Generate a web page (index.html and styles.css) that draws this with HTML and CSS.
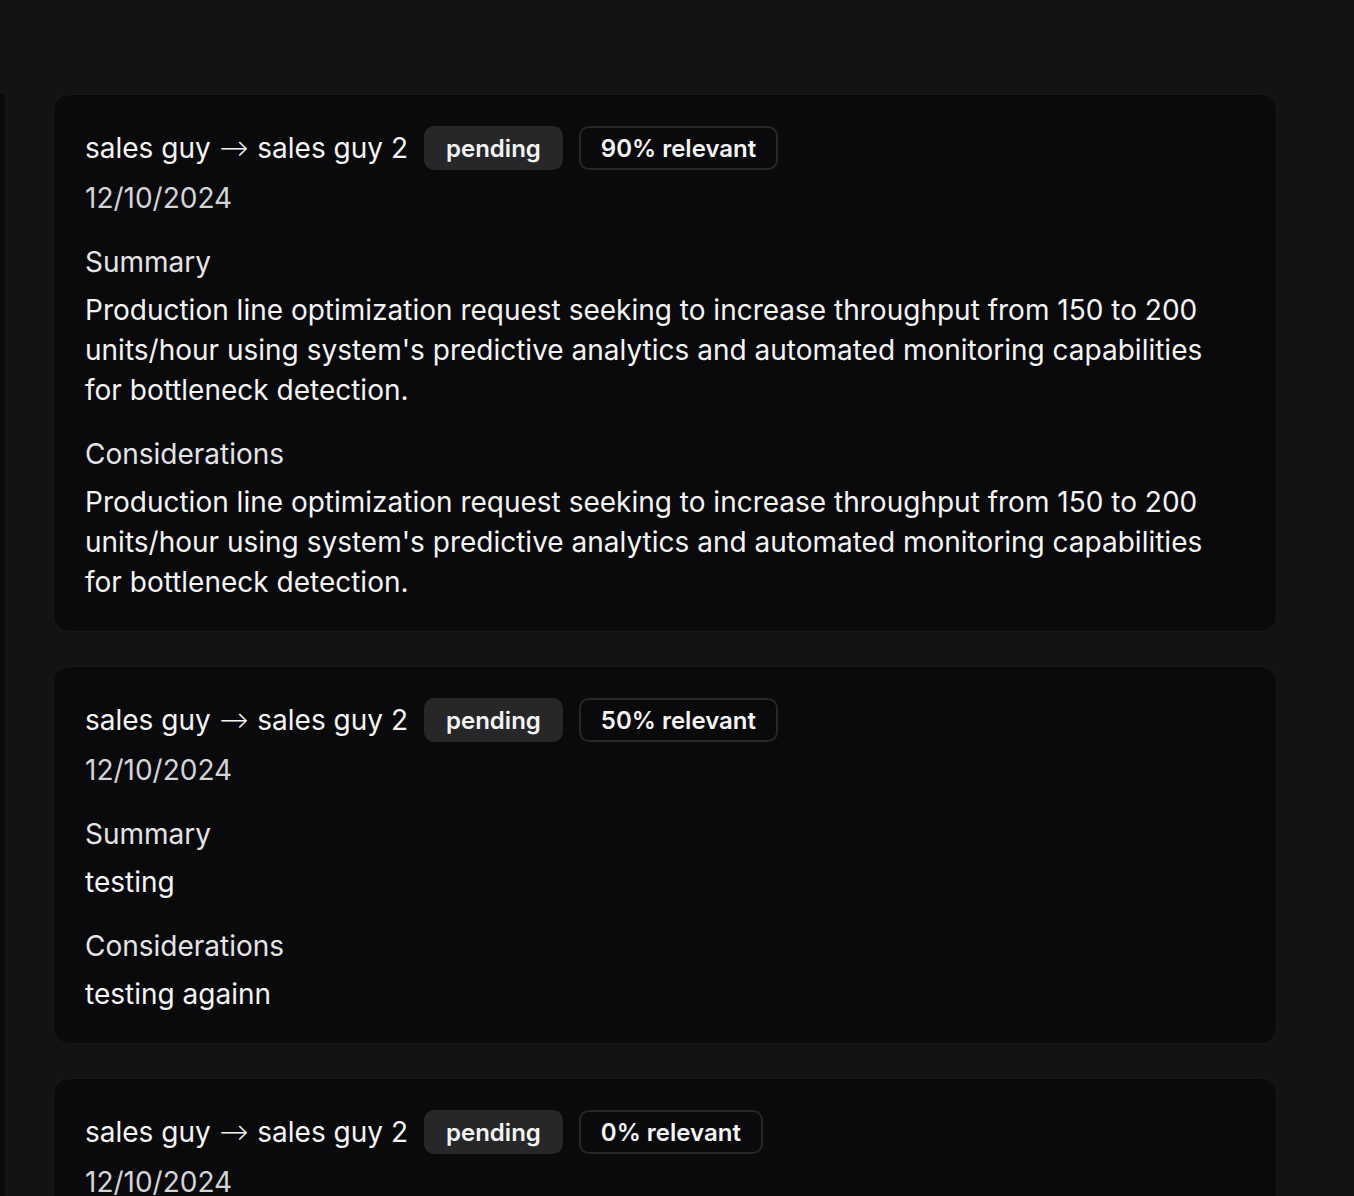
FILE: index.html
```html
<!DOCTYPE html>
<html lang="en">
<head>
<meta charset="utf-8">
<title>Messages</title>
<link rel="stylesheet" href="styles.css">
</head>
<body>
<div class="page">
  <div class="sliver"></div>
  <div class="list">
    <div class="card">
      <div class="head">
        <span class="title">sales guy <span class="arrow">⟶</span> sales guy 2</span>
        <span class="badge solid">pending</span>
        <span class="badge outline">90% relevant</span>
      </div>
      <div class="date">12/10/2024</div>
      <div class="section">
        <div class="label">Summary</div>
        <p class="text">Production line optimization request seeking to increase throughput from 150 to 200 units/hour using system's predictive analytics and automated monitoring capabilities for bottleneck detection.</p>
      </div>
      <div class="section">
        <div class="label">Considerations</div>
        <p class="text">Production line optimization request seeking to increase throughput from 150 to 200 units/hour using system's predictive analytics and automated monitoring capabilities for bottleneck detection.</p>
      </div>
    </div>
    <div class="card">
      <div class="head">
        <span class="title">sales guy <span class="arrow">⟶</span> sales guy 2</span>
        <span class="badge solid">pending</span>
        <span class="badge outline">50% relevant</span>
      </div>
      <div class="date">12/10/2024</div>
      <div class="section">
        <div class="label">Summary</div>
        <p class="text">testing</p>
      </div>
      <div class="section">
        <div class="label">Considerations</div>
        <p class="text">testing againn</p>
      </div>
    </div>
    <div class="card">
      <div class="head">
        <span class="title">sales guy <span class="arrow">⟶</span> sales guy 2</span>
        <span class="badge solid">pending</span>
        <span class="badge outline">0% relevant</span>
      </div>
      <div class="date">12/10/2024</div>
      <div class="section">
        <div class="label">Summary</div>
        <p class="text">testing</p>
      </div>
    </div>
  </div>
</div>
</body>
</html>
```
FILE: styles.css
```css
html, body {
  margin: 0;
  padding: 0;
  background: #131313;
  height: 100%;
  overflow: hidden;
}
body {
  font-family: Inter, "Noto Sans", sans-serif;
  color: #f4f4f5;
}
.page {
  display: flex;
  align-items: flex-start;
  padding-top: 94px;
}
.sliver {
  width: 5px;
  height: 1200px;
  background: #0a0a0c;
  border-top-right-radius: 12px;
  flex-shrink: 0;
}
.list {
  margin-left: 48px;
  width: 1224px;
  display: flex;
  flex-direction: column;
  gap: 34px;
}
.card {
  background: #0a0a0c;
  border: 1px solid #17171a;
  border-radius: 16px;
  padding: 31px 31px 29px;
}
.head {
  display: flex;
  align-items: center;
  gap: 16px;
  height: 44px;
}
.title {
  font-size: 28px;
  line-height: 40px;
  color: #f4f4f5;
}
.arrow {
  font-size: 23px;
  font-weight: 300;
  line-height: 0;
  vertical-align: 2px;
}
.badge {
  box-sizing: border-box;
  height: 44px;
  display: inline-flex;
  align-items: center;
  padding: 0 22px;
  border-radius: 10px;
  font-size: 24px;
  font-weight: 600;
  color: #f4f4f5;
}
.solid {
  background: #27272a;
}
.outline {
  border: 2px solid #27272a;
  padding: 0 20px;
}
.date {
  margin-top: 8px;
  font-size: 28px;
  line-height: 40px;
  color: #d4d4d8;
}
.section {
  margin-top: 24px;
}
.label {
  font-size: 28px;
  line-height: 40px;
  font-weight: 400;
  color: #e4e4e7;
}
.text {
  margin: 8px 0 0;
  font-size: 28px;
  line-height: 40px;
  color: #f4f4f5;
}
```
